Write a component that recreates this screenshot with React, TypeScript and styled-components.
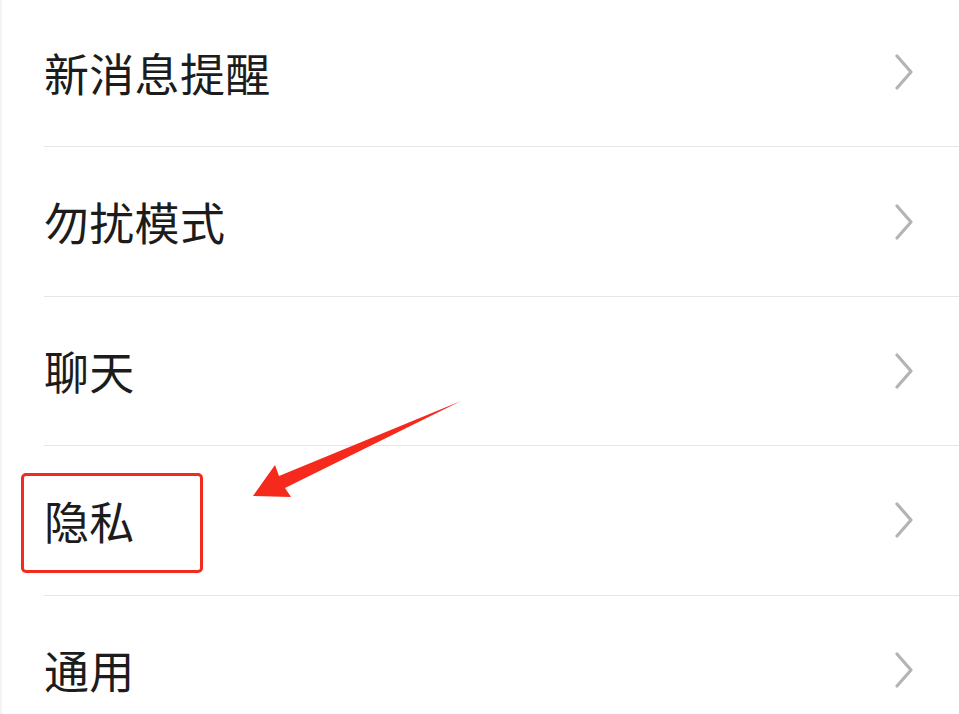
import React from "react";
import styled, { createGlobalStyle } from "styled-components";

const Global = createGlobalStyle`
  html, body { margin: 0; padding: 0; background: #ffffff; }
  body { font-family: "Noto Sans CJK SC", "Noto Sans", sans-serif; }
`;

const Page = styled.div`
  position: relative;
  width: 959px;
  height: 714px;
  overflow: hidden;
  background: #ffffff;
  box-sizing: border-box;
  border-left: 2px solid #f3f3f3;
`;

const List = styled.ul`
  list-style: none;
  margin: -2px 0 0 0;
  padding: 0;
`;

const Row = styled.li`
  display: flex;
  align-items: center;
  justify-content: space-between;
  height: 148.4px;
  margin-left: 42px;
  padding-right: 45px;
  border-bottom: 1px solid #e6e6e6;
`;

const Label = styled.span`
  font-size: 45px;
  line-height: 1;
  color: #1c1c1c;
  letter-spacing: 0.3px;
`;

const Chevron = styled.svg`
  width: 20px;
  height: 36px;
  flex: none;
`;

const Highlight = styled.div`
  position: absolute;
  left: 19px;
  top: 473px;
  width: 176px;
  height: 94px;
  border: 3px solid #f32a1e;
  border-radius: 5px;
`;

const Pointer = styled.svg`
  position: absolute;
  left: 0;
  top: 0;
  width: 959px;
  height: 714px;
  pointer-events: none;
`;

const items = ["新消息提醒", "勿扰模式", "聊天", "隐私", "通用"];

export default function App() {
  return (
    <>
      <Global />
      <Page>
        <List>
          {items.map((t) => (
            <Row key={t}>
              <Label>{t}</Label>
              <Chevron viewBox="0 0 20 36">
                <polyline
                  points="3,2 17,18 3,34"
                  fill="none"
                  stroke="#b4b4b4"
                  strokeWidth="3.2"
                  strokeLinecap="round"
                  strokeLinejoin="round"
                />
              </Chevron>
            </Row>
          ))}
        </List>
        <Highlight />
        <Pointer viewBox="0 0 959 714">
          <polygon
            points="459,401 283,488 289,497 251,496 273,465 277,476"
            fill="#f52a1c"
          />
        </Pointer>
      </Page>
    </>
  );
}
